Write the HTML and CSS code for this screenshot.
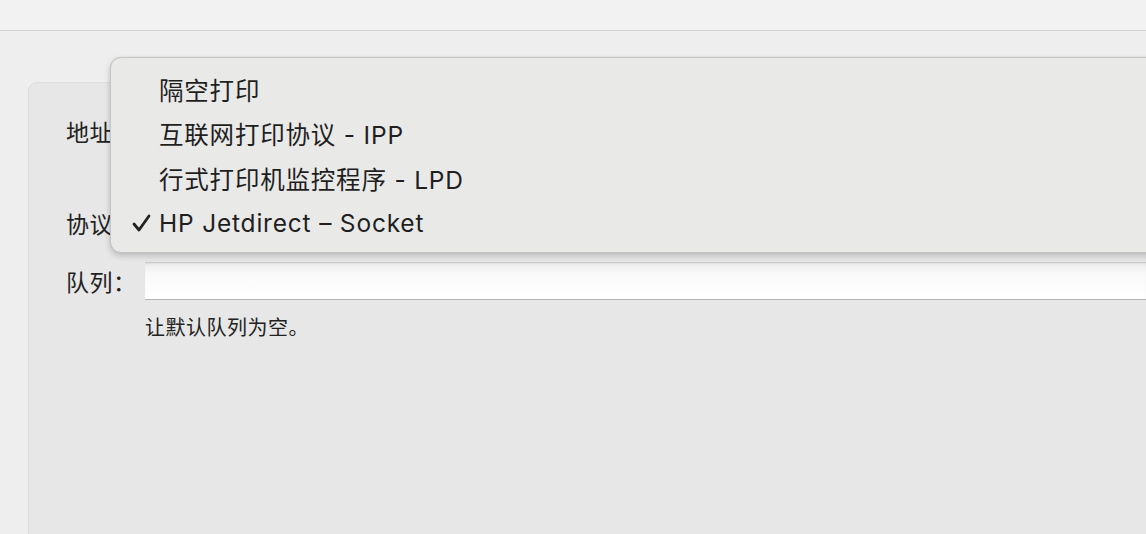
FILE: index.html
```html
<!DOCTYPE html>
<html lang="zh-CN">
<head>
    <meta charset="UTF-8">
    <meta name="viewport" content="width=device-width, initial-scale=1.0">
    <title>添加打印机</title>
    <link rel="stylesheet" href="styles.css">
</head>
<body>
    <div class="toolbar"></div>
    <div class="main">
        <div class="panel">
            <div class="form-row row-address">
                <span class="label">地址：</span>
                <div class="field-empty"></div>
            </div>
            <div class="form-row row-protocol">
                <span class="label">协议：</span>
                <div class="field-empty"></div>
            </div>
            <div class="form-row row-queue">
                <span class="label">队列：</span>
                <input class="text-input" type="text">
            </div>
            <p class="hint">让默认队列为空。</p>
        </div>
    </div>

    <ul class="popup-menu">
        <li class="menu-item"><span class="check"></span>隔空打印</li>
        <li class="menu-item"><span class="check"></span>互联网打印协议 - IPP</li>
        <li class="menu-item"><span class="check"></span>行式打印机监控程序 - LPD</li>
        <li class="menu-item selected">
            <span class="check">
                <svg width="19" height="18" viewBox="0 0 19 18">
                    <path d="M2 10 L7 16 L17 2" fill="none" stroke="#222" stroke-width="2.8" stroke-linecap="round" stroke-linejoin="round"/>
                </svg>
            </span>HP Jetdirect – Socket
        </li>
    </ul>
</body>
</html>
```

FILE: styles.css
```css
body {
    margin: 0;
    height: 534px;
    overflow: hidden;
    background-color: #edeeed;
    color: #222;
    font-family: "Inter", "Noto Sans CJK SC", sans-serif;
    display: flex;
    flex-direction: column;
}
.toolbar {
    height: 30px;
    background-color: #f2f2f2;
    border-bottom: 1px solid #cfcfcf;
}
.main {
    flex: 1;
    display: flex;
    padding: 51px 0 0 28px;
}
.panel {
    flex: 1;
    background-color: #e6e7e6;
    border-top: 1px solid #e0e0e0;
    border-left: 1px solid #dadbda;
    border-radius: 9px 0 0 0;
    padding: 27px 0 0 37px;
}
.form-row {
    display: flex;
    align-items: center;
}
.row-address {
    height: 42px;
}
.row-protocol {
    height: 42px;
    margin-top: 50px;
}
.row-queue {
    height: 38px;
    margin-top: 18px;
}
.label {
    width: 79px;
    font-size: 23px;
    letter-spacing: 0.5px;
    flex: none;
}
.field-empty {
    flex: 1;
}
.text-input {
    flex: 1;
    height: 38px;
    box-sizing: border-box;
    margin: 0;
    border: none;
    border-top: 1px solid #c9c9c9;
    border-bottom: 1px solid #b5b5b5;
    background: linear-gradient(#ececec, #fafafa 30%, #ffffff);
    box-shadow: inset 0 1px 2px rgba(0, 0, 0, 0.06);
    outline: none;
}
.hint {
    margin: 12px 0 0 79px;
    font-size: 20px;
    letter-spacing: 0.5px;
}
.popup-menu {
    position: absolute;
    left: 110px;
    top: 57px;
    width: 1060px;
    height: 196px;
    box-sizing: border-box;
    margin: 0;
    padding: 9px 0 0 0;
    list-style: none;
    background-color: #e9e9e8;
    border: 1px solid #c5c5c5;
    border-radius: 11px;
    box-shadow: 0 3px 6px rgba(0, 0, 0, 0.18), 0 0 2px rgba(0, 0, 0, 0.08);
}
.menu-item {
    height: 44.5px;
    display: flex;
    align-items: center;
    font-size: 24.5px;
    letter-spacing: 0.8px;
    color: #1f1f1f;
}
.check {
    width: 48px;
    flex: none;
    display: flex;
    justify-content: flex-end;
    padding-right: 8px;
    box-sizing: border-box;
}
```
